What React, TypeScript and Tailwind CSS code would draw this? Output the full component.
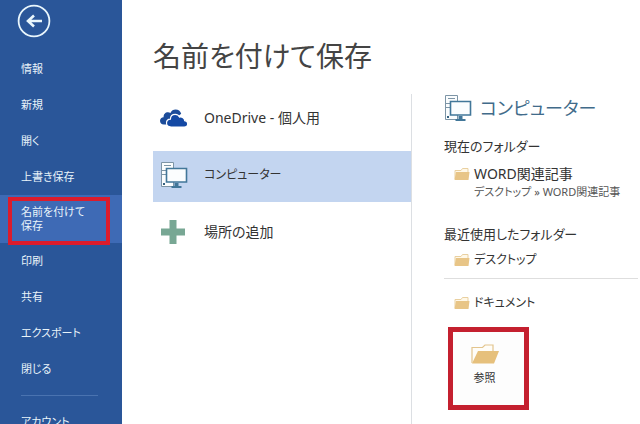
import clsx from 'clsx';

interface IconProps {
  className?: string;
}

const MENU_ITEMS = ['情報', '新規', '開く', '上書き保存', '名前を付けて保存', '印刷', '共有', 'エクスポート', '閉じる'];
const ACTIVE_ITEM = '名前を付けて保存';

const BackIcon = () => (
  <svg className="h-[34px] w-[34px]" viewBox="0 0 34 34" fill="none" stroke="#e9f6fc">
    <circle cx="17" cy="17" r="15.4" strokeWidth="1.8" />
    <path d="M25 17H11M17 11.5L11 17l6 5.5" strokeWidth="2.6" />
  </svg>
);

const OneDriveIcon = () => (
  <svg className="h-[20px] w-[28px]" viewBox="0 0 28 20">
    <path
      d="M6.5 16.5H3.800C1.500 16.500 0 14.900 0 12.800 0 10.700 1.600 9.300 3.600 9.200 3.400 6.400 5.300 4.300 8 4.300c.9 0 1.700.2 2.400.6C11.400 2.700 13.400 1.500 15.600 1.500c2.700 0 4.900 1.600 5.600 4.200L17 9z"
      fill="#1c4c9a"
    />
    <path
      d="M11 19c-2.600 0-4.500-1.700-4.500-3.900 0-2.200 1.700-3.800 3.900-3.900.1-2.900 2.100-4.800 4.800-4.800 1.900 0 3.500 1 4.300 2.700 2.600-.7 5 1.100 5.200 3.500 1.800.2 3 1.400 3 3.100 0 2-1.500 3.300-3.400 3.300z"
      fill="#1449a4"
      stroke="#fff"
      strokeWidth="1.2"
    />
  </svg>
);

const ComputerIcon = () => (
  <svg className="h-[28px] w-[28px]" viewBox="0 0 28 28" fill="none">
    <path d="M1.500 1.500h12v24h-12z" fill="#fbfdfe" stroke="#7d95a6" />
    <path d="M4 4.500h7M2 9.500h4M2 13.500h4" stroke="#7d95a6" />
    <path d="M3 22h2v2H3z" fill="#35617f" />
    <path d="M6.500 7.500h20v13.500h-20z" fill="#fbfdfe" stroke="#427799" strokeWidth="1.600" />
    <path d="M14.500 22h4v3h3v2h-10v-2h3z" fill="#427799" />
  </svg>
);

const PlusIcon = () => (
  <svg className="h-[26px] w-[26px]" viewBox="0 0 26 26">
    <path d="M9.500 1h7v8.500H25v7h-8.500V25h-7v-8.500H1v-7h8.500z" fill="#78a794" />
  </svg>
);

const FolderIcon = ({ className }: IconProps) => (
  <svg className={className} viewBox="0 0 28 20">
    <path d="M1 19V3.500h10.500L14 1h8v6" fill="#fffdf8" stroke="#e3c58e" strokeWidth="1.200" />
    <path d="M7 7h21l-5 12.500H1z" fill="#e6c07c" />
  </svg>
);

const SmallFolderIcon = () => (
  <svg className="h-[14px] w-[16px] shrink-0" viewBox="0 0 16 14">
    <path d="M1 12V3.500h6L8.500 1.500H14V5" fill="#fff8e8" stroke="#e9d0a0" />
    <path d="M2 5h13.500L14.500 13H.5z" fill="#e8c587" />
  </svg>
);

const Sidebar = () => (
  <nav className="w-[122px] shrink-0 overflow-hidden bg-[#2a5699] text-[11px] text-[#e9f4fa]">
    <div className="flex h-[51px] pt-1 pl-[17px]">
      <button type="button" aria-label="戻る" className="h-[34px]">
        <BackIcon />
      </button>
    </div>
    {MENU_ITEMS.map((item) =>
      item === ACTIVE_ITEM ? (
        <div key={item} className="relative bg-[#3e6ab5]">
          <button type="button" className="flex h-12 w-full items-center pr-8 pl-[21px] text-left leading-[14px]">
            {item}
          </button>
          <span className="pointer-events-none absolute top-0.5 right-3 -bottom-0.5 left-2 border-4 border-[#dc1c2c]" />
        </div>
      ) : (
        <button key={item} type="button" className="flex h-9 w-full items-center pl-[21px]">
          {item}
        </button>
      ),
    )}
    <hr className="my-2 mr-6 ml-[21px] border-[#4a73b0]" />
    <button type="button" className="flex h-9 w-full items-center pl-[21px]">
      アカウント
    </button>
  </nav>
);

const PLACES = [
  { label: 'OneDrive - 個人用', icon: <OneDriveIcon /> },
  { label: 'コンピューター', icon: <ComputerIcon />, selected: true },
  { label: '場所の追加', icon: <PlusIcon /> },
];

const PlaceList = () => (
  <div className="flex w-[259px] shrink-0 flex-col gap-[6px] border-r border-[#dcdfe3]">
    {PLACES.map(({ label, icon, selected }) => (
      <button
        key={label}
        type="button"
        className={clsx(
          'flex h-[51px] items-center pb-[3px] pl-[7px] text-[#333]',
          selected ? 'bg-[#c3d5f0] text-xs' : 'text-sm',
        )}
      >
        <span className="flex w-11">{icon}</span>
        {label}
      </button>
    ))}
  </div>
);

const FolderPanel = () => (
  <section className="min-w-0 flex-1 pl-8 text-[#333]">
    <h2 className="flex h-7 items-center gap-2 text-[18px] text-[#416b8a]">
      <ComputerIcon />
      コンピューター
    </h2>
    <h3 className="mt-[14px] text-[13px] leading-5">現在のフォルダー</h3>
    <button type="button" className="mt-2 flex gap-1 pl-[10px] text-left">
      <span className="pt-[3px]">
        <SmallFolderIcon />
      </span>
      <span className="whitespace-nowrap">
        <span className="block text-sm leading-5">WORD関連記事</span>
        <span className="block text-[11px] leading-4 text-[#555]">デスクトップ » WORD関連記事</span>
      </span>
    </button>
    <h3 className="mt-6 text-[13px] leading-5">最近使用したフォルダー</h3>
    <button type="button" className="mt-[6px] flex items-center gap-1 pl-[10px] text-xs leading-5">
      <SmallFolderIcon />
      デスクトップ
    </button>
    <hr className="mt-2 mr-[2px] border-[#dedede]" />
    <button type="button" className="mt-[14px] flex items-center gap-1 pl-[10px] text-xs leading-5">
      <SmallFolderIcon />
      ドキュメント
    </button>
    <button
      type="button"
      className="mt-[14px] ml-1 flex h-[83px] w-[81px] flex-col items-center gap-1 border-[5px] border-[#c4202f] bg-[#fdfdfd] pt-3 pr-2 text-[11px] leading-5"
    >
      <FolderIcon className="h-[20px] w-[28px]" />
      参照
    </button>
  </section>
);

const App = () => {
  return (
    <div className="flex h-screen overflow-hidden bg-white font-['Noto_Sans','Noto_Sans_CJK_JP',sans-serif] [font-feature-settings:'palt']">
      <Sidebar />
      <main className="flex min-w-0 flex-1 flex-col pl-[31px]">
        <h1 className="pt-9 text-[28px] leading-10 text-[#444]">名前を付けて保存</h1>
        <div className="mt-[18px] flex flex-1">
          <PlaceList />
          <FolderPanel />
        </div>
      </main>
    </div>
  );
};

export default App;
